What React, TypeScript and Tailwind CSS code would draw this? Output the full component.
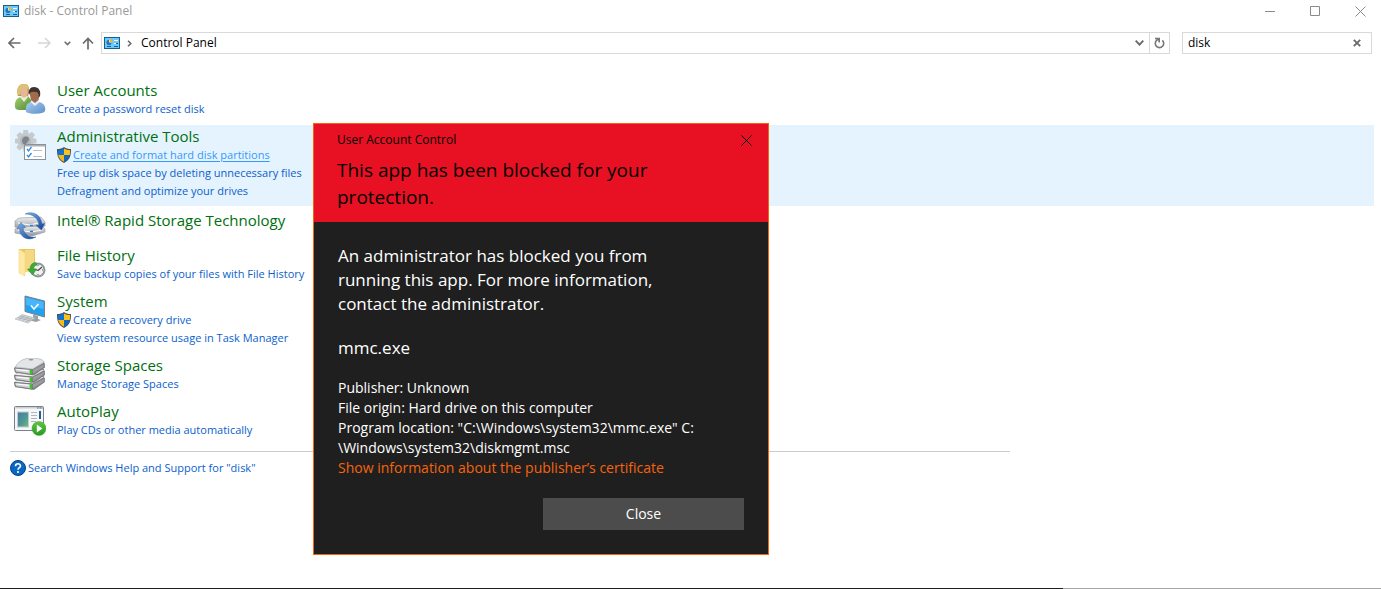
import { useState, type ReactNode } from "react";

const IconUsers = () => (
  <svg viewBox="0 0 32 32" className="size-8" aria-hidden="true">
    <defs>
      <linearGradient id="u-green" x1="0" y1="0" x2="1" y2="1">
        <stop offset="0" stopColor="#a8cf75" />
        <stop offset="1" stopColor="#4f8a2c" />
      </linearGradient>
      <linearGradient id="u-blue" x1="0" y1="0" x2="1" y2="1">
        <stop offset="0" stopColor="#a9cdf0" />
        <stop offset="1" stopColor="#5b90c8" />
      </linearGradient>
    </defs>
    <path d="M1 24c-.5-5 1-9 6-10l7-1 4 5v9H5c-2 0-4-1-4-3z" fill="url(#u-green)" />
    <path d="M6 14l4 5 4-5-1-2H7z" fill="#e6efd8" />
    <path d="M4 13C2 7 4 1 9.500 1S15 4 15 9l-1 4H5z" fill="#b9934a" />
    <ellipse cx="10" cy="9" rx="3.800" ry="5.500" fill="#e6b797" />
    <path d="M4 12C2.500 6 4 1 9.500 1 14 1 15 4 14.500 7c-2-2.500-3.500-3-5-3C6.500 4.500 6.500 8 6 12z" fill="#dcc272" />
    <path d="M12 29c-1-6 1-9 5-10h8c5 1 7 5 6 9-1 3-15 4-19 1z" fill="url(#u-blue)" />
    <path d="M16.500 19l4.500 4 4.500-4-2-3h-5z" fill="#e5f0fb" />
    <path d="M15.500 10c0-3 2-5 5-5s5 3 5 6l-1 6-3.500 3-4-3z" fill="#a06c4c" />
    <path d="M15 12c-1-5 1-8 5-8 5 0 7 4 6 9l-1.500 2c.5-5-.5-6-3.500-6-3-.5-5 0-6 3z" fill="#40332e" />
  </svg>
);

const IconAdmin = () => (
  <svg viewBox="0 0 32 32" className="size-8" aria-hidden="true">
    <g fill="#c6cacd">
      <circle cx="11.500" cy="12" r="8" />
      <path d="M9.500 1h4.500l.7 5H8.800zM9.500 23h4.500l.7-5H8.800zM1 9.800v4.500l5 .7V9zM22.500 9.800v4.500l-5 .7V9z" />
      <path d="M9.500 1h4.500l.7 5H8.800zM9.500 23h4.500l.7-5H8.800zM1 9.800v4.500l5 .7V9zM22.500 9.800v4.500l-5 .7V9z" transform="rotate(45 11.500 12)" />
    </g>
    <circle cx="11.500" cy="12" r="5.500" fill="#b4b9bd" />
    <path d="M8 12c0-3 2-4.500 4-4.500S15 9 15 11l-3 4h-3z" fill="#7d848a" />
    <rect x="10.500" y="15.500" width="21" height="15" fill="#fff" stroke="#8b9299" />
    <path d="M11 16h20v1.500H11z" fill="#aab0b6" />
    <path d="M13 20l1.500 2 3-4M13 26l1.500 2 3-4" fill="none" stroke="#2f8be0" strokeWidth="1.300" />
    <path d="M19 21.500h9M19 27.500h9" stroke="#b9bec3" />
  </svg>
);

const IconIntel = () => (
  <svg viewBox="0 0 32 32" className="size-8" aria-hidden="true">
    <defs>
      <linearGradient id="i-metal" x1="0" y1="0" x2="0" y2="1">
        <stop offset="0" stopColor="#f0f1f3" />
        <stop offset="1" stopColor="#8d9197" />
      </linearGradient>
      <linearGradient id="i-blue" x1="0" y1="0" x2="1" y2="1">
        <stop offset="0" stopColor="#7db4ea" />
        <stop offset="1" stopColor="#123f95" />
      </linearGradient>
    </defs>
    <path d="M1 10l4-3 22-1 4 5v4l-14 4-16-3z" fill="url(#i-metal)" stroke="#91959b" strokeWidth=".6" />
    <path d="M1 18l5-2 22-1 3 3v3l-13 4-17-3z" fill="url(#i-metal)" stroke="#91959b" strokeWidth=".6" />
    <path d="M4 12l12 2 12-3M4 19l13 2 11-2" stroke="#fff" fill="none" />
    <path d="M16 14.500h3M16 20.500h3" stroke="#247fe0" strokeWidth="1.500" />
    <path d="M11 3C18-.5 27 3 28 13l2.500-.5-3 6.500-5.500-4.500 3-.5C24 7 19 3 11 3z" fill="url(#i-blue)" stroke="#2358a5" strokeWidth=".4" />
    <path d="M22 26C14 30.500 6 27 5.500 17.500L3 18l4-6.500 4.500 5-2.500.5C10 23 15 27 22 26z" fill="url(#i-blue)" stroke="#2358a5" strokeWidth=".4" />
  </svg>
);

const IconFileHistory = () => (
  <svg viewBox="0 0 32 32" className="size-8" aria-hidden="true">
    <path d="M5 1h16v23H5z" fill="#eac65d" />
    <path d="M11 2h9v22h-9z" fill="#f3d984" />
    <path d="M5 1l6 4v23l-6-3z" fill="#ffe8a2" stroke="#efd073" strokeWidth=".5" />
    <circle cx="24" cy="22" r="7.500" fill="#999d9e" />
    <circle cx="24" cy="22" r="6" fill="#edf0ef" stroke="#6c7475" strokeWidth=".7" />
    <path d="M24 22.500l4-3.500M24 22.500l-4-1.500" stroke="#454b4c" strokeWidth="1.200" />
    <path d="M24 17v1M24 26v1M19 22h1M28 22h1" stroke="#535b5c" />
    <path d="M22 14.500c-4 0-6 3-6 6.500h-2.500l5 6 4-6h-3c0-2 1-3.500 3.500-4z" fill="#3daa37" stroke="#268323" strokeWidth=".5" />
  </svg>
);

const IconSystem = () => (
  <svg viewBox="0 0 32 32" className="size-8" aria-hidden="true">
    <path d="M11 2l19.500 5v16L11 17.500z" fill="#24a1ee" stroke="#74808a" />
    <path d="M12 3.500L29.500 8v7L12 11z" fill="#49b6fa" />
    <path d="M17 11.500l3 3.500 4.500-5" fill="none" stroke="#fff" strokeWidth="1.500" />
    <path d="M19 20.500l5 1.500v3l3 1-5 2-8-2 5-1.500z" fill="#98a1a8" />
    <path d="M8 20.500l13 3.500-7 5L1 25z" fill="#d2d6d9" stroke="#b0b6bb" strokeWidth=".6" />
    <path d="M6 22l13 3.500M4 23.500l13 3.500M11 21.500l-6 4M15 22.500l-6 4M18 24l-6 4" stroke="#949ca3" strokeWidth=".5" />
  </svg>
);

const Drive = ({ y }: { y: number }) => (
  <g transform={`translate(0 ${y})`}>
    <path d="M0 6.500L7 1l23-1 1 6-11 8L1 11z" fill="#8a8b8d" />
    <path d="M1 6l8-5 21 0-11 6.500z" fill="#efeff0" />
    <path d="M.5 6.500L18 8v5L1.500 10.500z" fill="#cfd0d1" stroke="#636568" strokeWidth=".7" />
    <path d="M2.500 8l12 1.300" stroke="#fff" strokeWidth="1.200" />
    <path d="M18.500 8l12-6-.5 4-11.500 7z" fill="#9b9c9f" stroke="#636568" strokeWidth=".5" />
    <rect x="15.800" y="8.200" width="2.600" height="4.200" rx="1" fill="#35c51d" />
  </g>
);

const IconStorage = () => (
  <svg viewBox="0 0 32 32" className="size-8" aria-hidden="true">
    <Drive y={18} />
    <Drive y={11} />
    <Drive y={3.5} />
    <path d="M1.500 9c2-5 8-9 15.500-9 6 0 12 1 13 4L18.500 11z" fill="#e4e5e6" stroke="#a4a5a7" strokeWidth=".6" />
    <ellipse cx="17" cy="1.800" rx="2.500" ry=".8" fill="#8d8e90" />
  </svg>
);

const IconAutoPlay = () => (
  <svg viewBox="0 0 32 32" className="size-8" aria-hidden="true">
    <defs>
      <linearGradient id="a-pic" x1="0" y1="0" x2="1" y2="1">
        <stop offset="0" stopColor="#4a78a6" />
        <stop offset=".6" stopColor="#4f9b92" />
        <stop offset="1" stopColor="#7dbb78" />
      </linearGradient>
      <linearGradient id="a-play" x1="0" y1="0" x2="0" y2="1">
        <stop offset="0" stopColor="#62c43f" />
        <stop offset="1" stopColor="#249b21" />
      </linearGradient>
    </defs>
    <rect x=".5" y="2.500" width="29" height="24" rx="1" fill="#f6f7f8" stroke="#78828b" />
    <path d="M1 3h28v1.500H1z" fill="#cbd0d5" />
    <path d="M23 4h1.500M25.500 4h1.500M27.500 4h1" stroke="#57616b" />
    <rect x="3.500" y="8" width="11" height="15" fill="url(#a-pic)" stroke="#c3cbd0" />
    <path d="M17 8.500h6M17 11.500h6M17 14.500h6M17 17.500h5" stroke="#b0b6bd" />
    <path d="M26 7v8" stroke="#2b5c91" strokeWidth="2" />
    <circle cx="25" cy="24.500" r="7" fill="url(#a-play)" stroke="#38a62c" strokeWidth=".5" />
    <path d="M22.800 20.500v8l5.500-4z" fill="#fff" />
  </svg>
);

const Shield = () => (
  <svg viewBox="0 0 14 16" className="h-4 w-3.5 shrink-0" aria-hidden="true">
    <path d="M7 0c2 1.500 4 2 7 2 0 7-1 11-7 14C1 13 0 9 0 2c3 0 5-.5 7-2z" fill="#46525c" />
    <path d="M7 1.500V8H1.200C1 6 1 5 1 3c2.500 0 4-.5 6-1.500z" fill="#1273cf" />
    <path d="M7 1.500V8h5.800c.2-2 .2-3 .2-5-2.500 0-4-.5-6-1.500z" fill="#fcc21b" />
    <path d="M7 8v6.800C3.500 13 1.800 11 1.200 8z" fill="#fcb813" />
    <path d="M7 8v6.800c3.500-1.800 5.200-3.800 5.800-6.800z" fill="#1168bf" />
  </svg>
);

const PanelIcon = () => (
  <svg viewBox="0 0 16 12" className="h-3 w-4 shrink-0" aria-hidden="true">
    <rect width="16" height="12" fill="#12608f" />
    <rect x="1" y="1" width="14" height="10" fill="#6fc8f8" />
    <circle cx="5" cy="5.500" r="2.800" fill="#fff" />
    <path d="M5 5.500V2.700A2.800 2.800 0 1 0 7.800 5.500z" fill="#1879c4" />
    <path d="M5.500 5V2A3 3 0 0 1 8.500 5z" fill="#f3b22b" />
    <path d="M10 3.500h4M10 6.500h2" stroke="#fff" />
    <path d="M12 6.500h2M10 9.500h4M3 9.500h4" stroke="#12609f" />
  </svg>
);

type Task = { label: string; shield?: boolean; hot?: boolean };
type Category = { title: string; icon: ReactNode; tasks: Task[]; selected?: boolean };

const categories: Category[] = [
  { title: "User Accounts", icon: <IconUsers />, tasks: [{ label: "Create a password reset disk" }] },
  {
    title: "Administrative Tools",
    icon: <IconAdmin />,
    selected: true,
    tasks: [
      { label: "Create and format hard disk partitions", shield: true, hot: true },
      { label: "Free up disk space by deleting unnecessary files" },
      { label: "Defragment and optimize your drives" },
    ],
  },
  { title: "Intel® Rapid Storage Technology", icon: <IconIntel />, tasks: [] },
  { title: "File History", icon: <IconFileHistory />, tasks: [{ label: "Save backup copies of your files with File History" }] },
  {
    title: "System",
    icon: <IconSystem />,
    tasks: [{ label: "Create a recovery drive", shield: true }, { label: "View system resource usage in Task Manager" }],
  },
  { title: "Storage Spaces", icon: <IconStorage />, tasks: [{ label: "Manage Storage Spaces" }] },
  { title: "AutoPlay", icon: <IconAutoPlay />, tasks: [{ label: "Play CDs or other media automatically" }] },
];

function CategoryRow({ title, icon, tasks, selected }: Category) {
  return (
    <li className={`flex min-h-9 gap-[11px] pr-2 pl-1 ${selected ? "bg-[#e5f3ff]" : ""}`}>
      <div className="shrink-0 pt-1">{icon}</div>
      <div className={`whitespace-nowrap ${tasks.length ? "pt-[3px] pb-1.5" : "pt-[5px]"}`}>
        <h2 className="mb-0.5 text-[15px] leading-4 text-[#00700f]">
          <a href="#">{title}</a>
        </h2>
        <ul>
          {tasks.map((t) => (
            <li key={t.label} className="flex h-[18px] items-center gap-0.5 text-[11px] leading-[18px]">
              {t.shield && <Shield />}
              <a href="#" className={t.hot ? "text-[#3399ff] underline underline-offset-2" : "text-[#0b5fcc]"}>
                {t.label}
              </a>
            </li>
          ))}
        </ul>
      </div>
    </li>
  );
}

function TitleBar() {
  return (
    <header className="flex h-[22px] items-center gap-[5px] pl-[3px]">
      <PanelIcon />
      <h1 className="flex-1 text-[12px] leading-4 text-[#999999]">disk - Control Panel</h1>
      <div className="flex gap-1 text-[#8a8a8a]">
        <button type="button" aria-label="Minimize" className="flex h-5 w-[41px] items-center justify-center">
          <svg viewBox="0 0 11 11" className="size-[11px]"><path d="M0 5.500h10" stroke="currentColor" /></svg>
        </button>
        <button type="button" aria-label="Maximize" className="flex h-5 w-[41px] items-center justify-center">
          <svg viewBox="0 0 11 11" className="size-[11px]"><path d="M.5.500h9v9h-9z" fill="none" stroke="currentColor" /></svg>
        </button>
        <button type="button" aria-label="Close window" className="flex h-5 w-[41px] items-center justify-center">
          <svg viewBox="0 0 11 11" className="size-[11px]"><path d="M.5.500l10 10M10.500.500l-10 10" stroke="currentColor" /></svg>
        </button>
      </div>
    </header>
  );
}

function NavBar() {
  const [query, setQuery] = useState("disk");
  return (
    <nav className="mt-2.5 flex h-[22px] items-center pr-[9px] pl-2">
      <button type="button" aria-label="Back" className="mr-[17px] text-[#6b6b6b]">
        <svg viewBox="0 0 13 12" className="h-3 w-[13px]"><path d="M12.500 6H1.500M6 1L1 6l5 5" fill="none" stroke="currentColor" strokeWidth="1.700" /></svg>
      </button>
      <button type="button" aria-label="Forward" className="mr-[13px] text-[#d5d5d5]">
        <svg viewBox="0 0 13 12" className="h-3 w-[13px]"><path d="M0 6h11.500M7 1l5 5-5 5" fill="none" stroke="currentColor" strokeWidth="1.500" /></svg>
      </button>
      <button type="button" aria-label="Recent locations" className="mr-[11px] text-[#6b6b6b]">
        <svg viewBox="0 0 7 5" className="h-[5px] w-[7px]"><path d="M.700.800l2.800 2.800L6.300.800" fill="none" stroke="currentColor" strokeWidth="1.500" /></svg>
      </button>
      <button type="button" aria-label="Up" className="mr-[7px] text-[#6b6b6b]">
        <svg viewBox="0 0 12 13" className="h-[13px] w-3"><path d="M6 12.500V1.500M1 6.500l5-5 5 5" fill="none" stroke="currentColor" strokeWidth="1.700" /></svg>
      </button>
      <div className="flex h-[22px] flex-1 items-center border border-[#d9d9d9] pl-0.5">
        <PanelIcon />
        <svg viewBox="0 0 5 7" className="ml-[7px] h-[7px] w-[5px]" aria-hidden="true"><path d="M1 .700l2.800 2.800L1 6.300" fill="none" stroke="#6b6b6b" strokeWidth="1.600" /></svg>
        <a href="#" className="ml-[9px] flex-1 text-[12px] leading-4 text-black">Control Panel</a>
        <button type="button" aria-label="Previous locations" className="flex h-5 w-5 items-center justify-center text-[#6b6b6b]">
          <svg viewBox="0 0 9 6" className="h-1.5 w-[9px]"><path d="M.700.700l3.800 4 3.800-4" fill="none" stroke="currentColor" strokeWidth="1.900" /></svg>
        </button>
        <button type="button" aria-label="Refresh" className="flex h-5 w-5 items-center justify-center border-l border-[#d9d9d9] text-[#777777]">
          <svg viewBox="0 0 11 12" className="h-3 w-[11px]"><path d="M8.300 3.300A4.200 4.200 0 1 1 2.600 3.400L4.600 1.800M1 1.500H5.200V5.500" fill="none" stroke="currentColor" strokeWidth="1.600" /></svg>
        </button>
      </div>
      <div className="ml-3 flex h-[22px] w-[190px] items-center border border-[#d9d9d9] pr-2.5 pl-[5px]">
        <input
          aria-label="Search Control Panel"
          value={query}
          onChange={(e) => setQuery(e.target.value)}
          className="min-w-0 flex-1 text-[12px] leading-4 text-black outline-none"
        />
        <button type="button" aria-label="Clear search" onClick={() => setQuery("")} className="text-[#6b6b6b]">
          <svg viewBox="0 0 8 8" className="size-2"><path d="M.800.800l6.400 6.400M7.200.800L.8 7.200" stroke="currentColor" strokeWidth="1.900" /></svg>
        </button>
      </div>
    </nav>
  );
}

function BlockedDialog() {
  return (
    <section
      role="dialog"
      aria-labelledby="uac-title"
      className="absolute top-[123px] left-[313px] w-[456px] border border-[#f7630c] bg-[#1f1f1f] text-white"
    >
      <div className="bg-[#e81123] pt-2 pr-2.5 pb-[11px] pl-[23px] text-black">
        <div className="flex h-4 items-center justify-between text-[12px] leading-4">
          <span>User Account Control</span>
          <button type="button" aria-label="Dismiss" className="flex size-6 items-center justify-center">
            <svg viewBox="0 0 11 11" className="size-[11px]"><path d="M.5.500l10 10M10.500.500l-10 10" stroke="currentColor" /></svg>
          </button>
        </div>
        <h2 id="uac-title" className="mt-[9px] max-w-[340px] text-[19px] leading-[27px]">
          This app has been blocked for your protection.
        </h2>
      </div>
      <div className="px-6 pt-[22px] pb-6">
        <p className="max-w-[330px] text-[17px] leading-6">
          An administrator has blocked you from running this app. For more information, contact the administrator.
        </p>
        <p className="mt-5 text-[17px] leading-6">mmc.exe</p>
        <div className="mt-[18px] text-[14px] leading-5 whitespace-nowrap">
          <p>Publisher: Unknown</p>
          <p>File origin: Hard drive on this computer</p>
          <p>
            Program location: "C:\Windows\system32\mmc.exe" C:
            <br />
            \Windows\system32\diskmgmt.msc
          </p>
          <a href="#" className="block text-[#f7630c]">Show information about the publisher’s certificate</a>
        </div>
        <div className="mt-5 flex justify-end">
          <button type="button" className="h-8 w-[201px] bg-[#4c4c4c] text-[14px] leading-5">Close</button>
        </div>
      </div>
    </section>
  );
}

export default function App() {
  return (
    <div className="relative flex min-h-screen flex-col overflow-hidden bg-white font-['Open_Sans','Noto_Sans',sans-serif]">
      <TitleBar />
      <NavBar />
      <main className="flex-1 pt-[25px] pr-[7px] pl-2.5">
        <ul className="flex flex-col gap-px">
          {categories.map((c) => (
            <CategoryRow key={c.title} {...c} />
          ))}
        </ul>
        <hr className="mt-1.5 max-w-[1000px] border-[#cccccc]" />
        <a href="#" className="mt-2 flex items-center gap-0.5 text-[11px] leading-4 text-[#0b5fcc]">
          <svg viewBox="0 0 16 16" className="size-4" aria-hidden="true">
            <circle cx="8" cy="8" r="7.500" fill="#0967c4" stroke="#07417f" />
            <path d="M5.500 6.200c0-3.300 5-3.200 5-.3 0 1.800-2.500 1.900-2.500 3.900" fill="none" stroke="#fff" strokeWidth="1.600" />
            <circle cx="8" cy="12" r="1.100" fill="#fff" />
          </svg>
          Search Windows Help and Support for "disk"
        </a>
      </main>
      <div className="flex h-px bg-[#a6a6a6]">
        <div className="w-[77%] bg-[#1f1f1f]" />
      </div>
      <BlockedDialog />
    </div>
  );
}
